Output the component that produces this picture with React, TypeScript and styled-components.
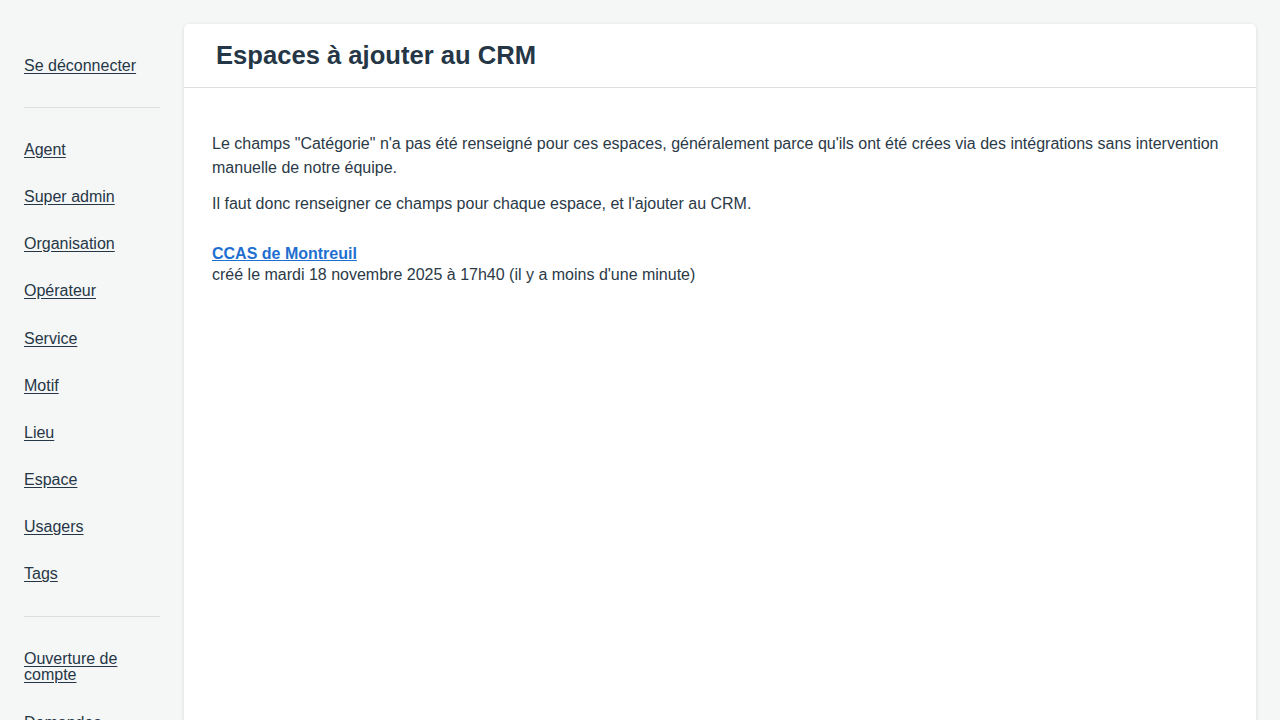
import React from "react";
import styled, { createGlobalStyle } from "styled-components";

const Global = createGlobalStyle`
  html, body { margin: 0; padding: 0; }
  body {
    background: #f5f6f6;
    font-family: "Liberation Sans", Arial, sans-serif;
    color: #2b3a47;
    overflow: hidden;
  }
`;

const Layout = styled.div`
  display: flex;
  align-items: flex-start;
  min-height: 720px;
`;

const Sidebar = styled.nav`
  width: 136px;
  flex: none;
  padding: 58px 24px 0 24px;
  display: flex;
  flex-direction: column;
`;

const NavGroup = styled.div`
  display: flex;
  flex-direction: column;
  gap: 31.17px;
`;

const NavLink = styled.a`
  display: block;
  font-size: 16px;
  line-height: 16px;
  color: #253746;
  text-decoration: underline;
  text-underline-offset: 2px;
  cursor: pointer;
`;

const Divider = styled.hr`
  border: none;
  border-top: 1px solid #dcdedf;
  margin: 33px 0 34px 0;
  width: 136px;
  &:last-of-type {
    margin: 34px 0 34px 0;
  }
`;

const Card = styled.main`
  flex: 1;
  margin: 24px 24px 0 0;
  background: #fff;
  border-radius: 5px;
  box-shadow: 0 1px 4px rgba(0, 0, 0, 0.12);
  min-height: 720px;
`;

const CardHeader = styled.header`
  height: 63px;
  border-bottom: 1px solid #dcdfe1;
  display: flex;
  align-items: center;
  padding: 0 32px;
`;

const Title = styled.h1`
  margin: 0;
  font-size: 25.6px;
  font-weight: 700;
  color: #253746;
`;

const CardBody = styled.section`
  padding: 44px 28px 28px 28px;
`;

const Para = styled.p`
  margin: 0 0 12px 0;
  font-size: 16px;
  line-height: 24px;
  color: #2b3a47;
`;

const Entry = styled.div`
  margin-top: 27px;
  font-size: 16px;
  line-height: 21px;
  color: #2b3a47;
`;

const EntryLink = styled.a`
  display: block;
  font-weight: 700;
  color: #1f6fd0;
  text-decoration: underline;
  cursor: pointer;
`;

const top = ["Se déconnecter"];
const mid = [
  "Agent",
  "Super admin",
  "Organisation",
  "Opérateur",
  "Service",
  "Motif",
  "Lieu",
  "Espace",
  "Usagers",
  "Tags",
];
const bottom = ["Ouverture de compte", "Demandes"];

export default function App() {
  return (
    <>
      <Global />
      <Layout>
        <Sidebar>
          <NavGroup>
            {top.map((t) => (
              <NavLink key={t}>{t}</NavLink>
            ))}
          </NavGroup>
          <Divider />
          <NavGroup>
            {mid.map((t) => (
              <NavLink key={t}>{t}</NavLink>
            ))}
          </NavGroup>
          <Divider />
          <NavGroup>
            {bottom.map((t) => (
              <NavLink key={t}>{t}</NavLink>
            ))}
          </NavGroup>
        </Sidebar>
        <Card>
          <CardHeader>
            <Title>Espaces à ajouter au CRM</Title>
          </CardHeader>
          <CardBody>
            <Para>
              Le champs "Catégorie" n'a pas été renseigné pour ces espaces, généralement parce qu'ils ont été crées via des intégrations sans intervention manuelle de notre équipe.
            </Para>
            <Para>Il faut donc renseigner ce champs pour chaque espace, et l'ajouter au CRM.</Para>
            <Entry>
              <EntryLink>CCAS de Montreuil</EntryLink>
              créé le mardi 18 novembre 2025 à 17h40 (il y a moins d'une minute)
            </Entry>
          </CardBody>
        </Card>
      </Layout>
    </>
  );
}
